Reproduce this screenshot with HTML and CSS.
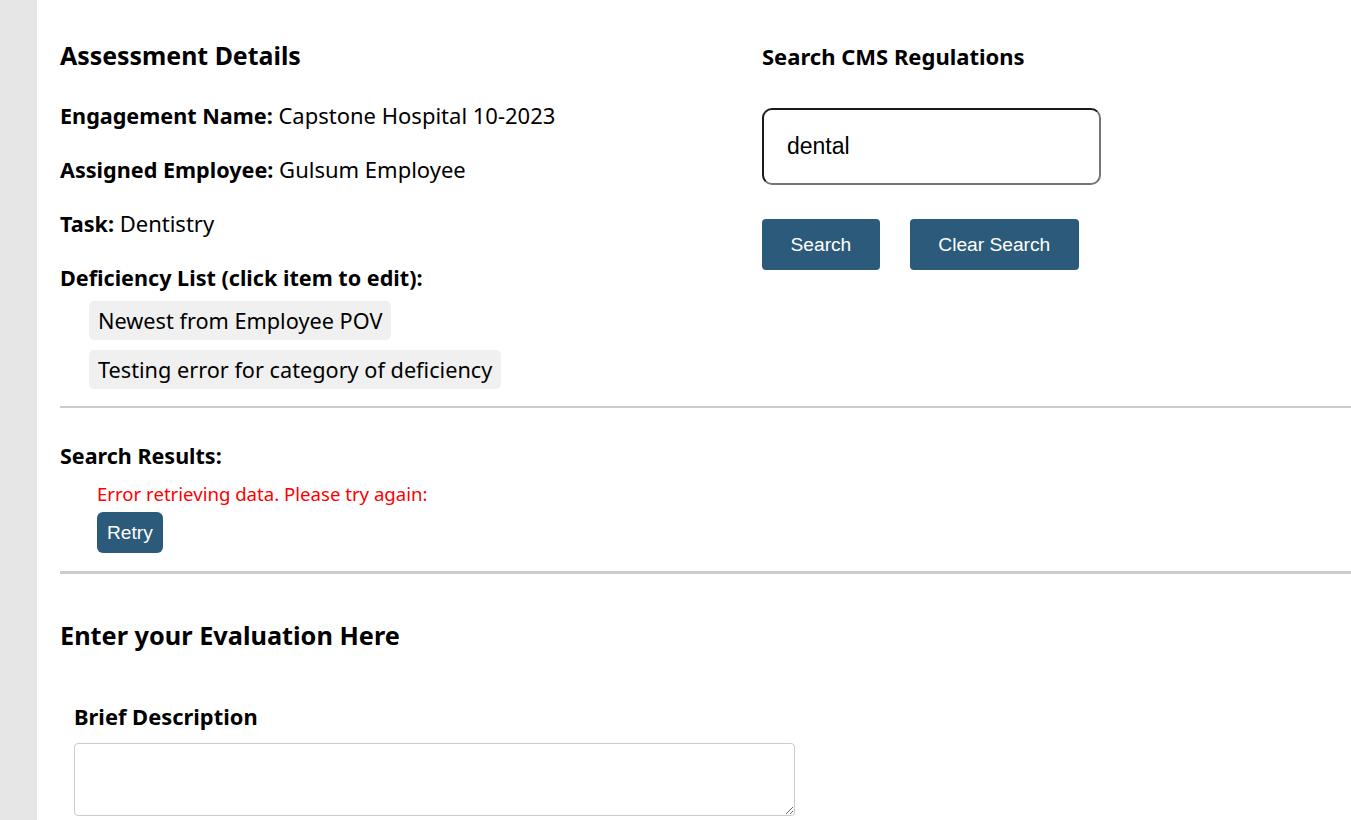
FILE: index.html
```html
<!DOCTYPE html>
<html lang="en">
<head>
<meta charset="utf-8">
<title>Assessment Details</title>
<link rel="stylesheet" href="styles.css">
</head>
<body>
<div class="page">
  <aside class="sidebar"></aside>
  <main class="main">
    <section class="top">
      <div class="details">
        <h2 class="title">Assessment Details</h2>
        <p class="row"><strong>Engagement Name:</strong> Capstone Hospital 10-2023</p>
        <p class="row"><strong>Assigned Employee:</strong> Gulsum Employee</p>
        <p class="row"><strong>Task:</strong> Dentistry</p>
        <p class="row list-head"><strong>Deficiency List (click item to edit):</strong></p>
        <ul class="def-list">
          <li class="def-item">Newest from Employee POV</li>
          <li class="def-item">Testing error for category of deficiency</li>
        </ul>
      </div>
      <div class="search">
        <h3 class="search-title">Search CMS Regulations</h3>
        <input class="search-input" type="text" value="dental">
        <div class="btn-row">
          <button class="btn btn-lg">Search</button>
          <button class="btn btn-lg">Clear Search</button>
        </div>
      </div>
    </section>
    <hr class="rule">
    <section class="results">
      <h3 class="results-title">Search Results:</h3>
      <div class="results-body">
        <p class="error">Error retrieving data. Please try again:</p>
        <button class="btn btn-sm">Retry</button>
      </div>
    </section>
    <hr class="rule rule-2">
    <section class="evaluation">
      <h2 class="title eval-title">Enter your Evaluation Here</h2>
      <div class="field">
        <label class="field-label">Brief Description</label>
        <textarea class="field-area"></textarea>
      </div>
    </section>
  </main>
</div>
</body>
</html>
```
FILE: styles.css
```css
* { box-sizing: border-box; }
html, body { margin: 0; padding: 0; background: #fff; }
body {
  font-family: "Noto Sans", "Open Sans", sans-serif;
  color: #000;
  overflow: hidden;
}
.page {
  display: flex;
  min-height: 820px;
}
.sidebar {
  width: 37px;
  flex: none;
  background: #e6e6e6;
}
.main {
  flex: 1;
  padding-left: 23px;
}
.top {
  display: grid;
  grid-template-columns: 702px 1fr;
  padding-top: 39px;
}
.title {
  margin: 0;
  font-size: 24.9px;
  line-height: 32px;
  font-weight: 700;
}
.details .title { margin-bottom: 31px; }
.row {
  margin: 0 0 27px;
  font-size: 22px;
  line-height: 27px;
}
.row strong { font-size: 21.6px; }
.list-head { margin-bottom: 10px; }
.def-list {
  list-style: none;
  margin: 0;
  padding: 0 0 0 29px;
  display: flex;
  flex-direction: column;
  align-items: flex-start;
  gap: 10px;
}
.def-item {
  background: #f0f0f0;
  border-radius: 5px;
  padding: 6px 9px;
  font-size: 21.7px;
  line-height: 27px;
  cursor: pointer;
}
.search-title {
  margin: 3px 0 0;
  font-size: 22px;
  line-height: 28px;
  font-weight: 700;
}
.search-input {
  display: block;
  margin-top: 38px;
  width: 339px;
  height: 77px;
  border: 2px solid #1a1a1a;
  border-right-color: #767676;
  border-bottom-color: #767676;
  border-radius: 10px;
  padding: 0 23px;
  font-family: "Liberation Sans", Arial, sans-serif;
  font-size: 23px;
  color: #000;
  outline: none;
}
.btn-row {
  display: flex;
  gap: 30px;
  margin-top: 34px;
}
.btn {
  border: none;
  background: #2c5a7a;
  color: #fff;
  font-family: "Liberation Sans", Arial, sans-serif;
  font-size: 19.2px;
  cursor: pointer;
}
.btn-lg {
  height: 51px;
  padding: 0 28.5px;
  border-radius: 4px;
}
.btn-sm {
  height: 41px;
  padding: 0 10px;
  border-radius: 6px;
}
.rule {
  border: none;
  height: 2px;
  background: #cccccc;
  margin: 17px 0 0;
}
.rule-2 { height: 3px; margin-top: 18px; }
.results { padding-top: 34px; }
.results-title {
  margin: 0;
  font-size: 21.5px;
  line-height: 27px;
  font-weight: 700;
}
.results-body {
  padding-left: 37px;
  padding-top: 13px;
}
.error {
  margin: 0 0 6px;
  color: #ff0000;
  font-size: 18.6px;
  line-height: 24px;
}
.evaluation { padding-top: 45px; }
.eval-title { margin-bottom: 53px; font-size: 25.3px; }
.field { padding-left: 14px; }
.field-label {
  display: block;
  font-size: 21.9px;
  line-height: 25px;
  font-weight: 700;
  margin-bottom: 14px;
}
.field-area {
  display: block;
  width: 721px;
  height: 73px;
  border: 1px solid #cccccc;
  border-radius: 4px;
  resize: vertical;
  font-family: inherit;
}
```
